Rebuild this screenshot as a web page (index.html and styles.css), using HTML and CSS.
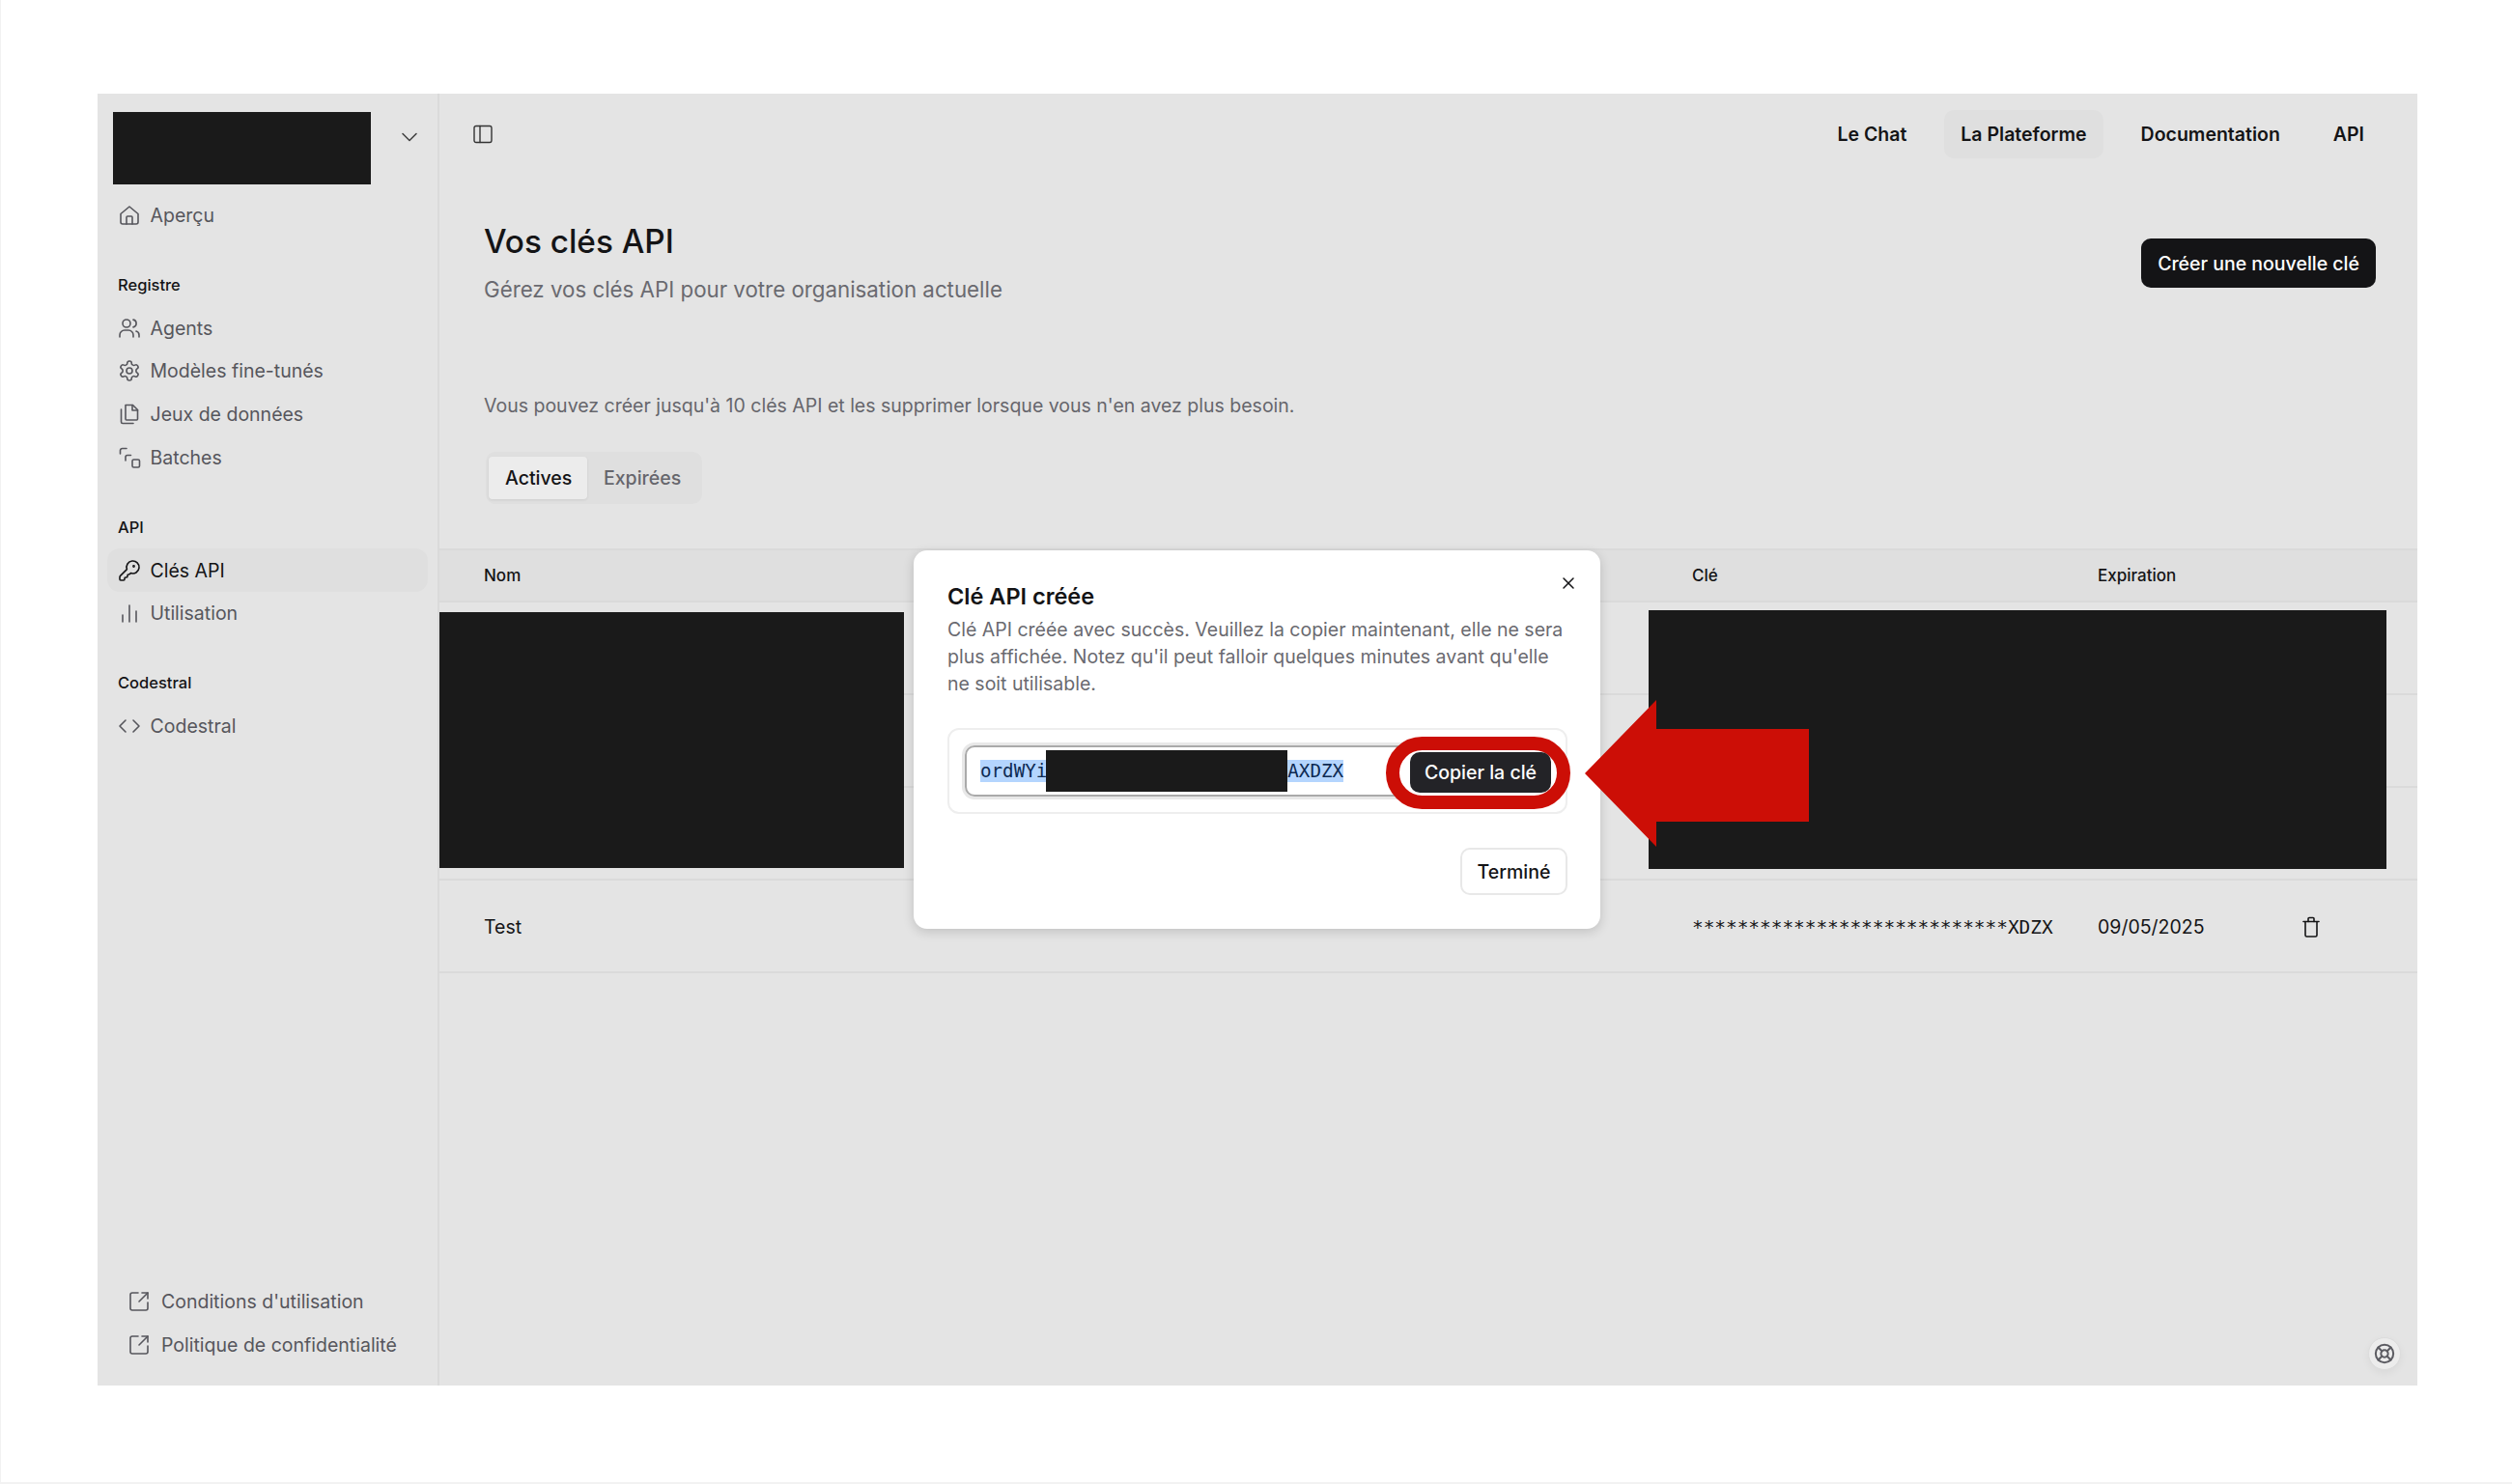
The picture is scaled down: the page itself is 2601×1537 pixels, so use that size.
FILE: index.html
```html
<!DOCTYPE html>
<html lang="fr">
<head>
    <meta charset="UTF-8">
    <title>Vos clés API</title>
    <link rel="stylesheet" href="styles.css">
</head>
<body>
    <div class="page">
        <div class="app">
            <aside class="sidebar">
                <div class="org">
                    <div class="redact org-logo"></div>
                    <svg class="org-chevron" viewBox="0 0 24 24"><path d="m5 8.5 7 7 7-7"/></svg>
                </div>
                <a class="nav-item">
                    <svg class="icon" viewBox="0 0 24 24"><path d="M3 10.5 12 3l9 7.5V19a2 2 0 0 1-2 2H5a2 2 0 0 1-2-2z"/><path d="M9 21v-7a1 1 0 0 1 1-1h4a1 1 0 0 1 1 1v7"/></svg>
                    Aperçu
                </a>

                <div class="nav-label">Registre</div>
                <a class="nav-item">
                    <svg class="icon" viewBox="0 0 24 24"><circle cx="9" cy="7" r="4"/><path d="M2 21v-2a5 5 0 0 1 5-5h4a5 5 0 0 1 5 5v2"/><path d="M16 3.1a4 4 0 0 1 0 7.8"/><path d="M22 21v-2a4 4 0 0 0-3-3.9"/></svg>
                    Agents
                </a>
                <a class="nav-item">
                    <svg class="icon" viewBox="0 0 24 24"><path d="M12.22 2h-.44a2 2 0 0 0-2 2v.18a2 2 0 0 1-1 1.73l-.43.25a2 2 0 0 1-2 0l-.15-.08a2 2 0 0 0-2.73.73l-.22.38a2 2 0 0 0 .73 2.73l.15.1a2 2 0 0 1 1 1.72v.51a2 2 0 0 1-1 1.74l-.15.09a2 2 0 0 0-.73 2.73l.22.38a2 2 0 0 0 2.73.73l.15-.08a2 2 0 0 1 2 0l.43.25a2 2 0 0 1 1 1.73V20a2 2 0 0 0 2 2h.44a2 2 0 0 0 2-2v-.18a2 2 0 0 1 1-1.73l.43-.25a2 2 0 0 1 2 0l.15.08a2 2 0 0 0 2.73-.73l.22-.39a2 2 0 0 0-.73-2.73l-.15-.08a2 2 0 0 1-1-1.74v-.5a2 2 0 0 1 1-1.74l.15-.09a2 2 0 0 0 .73-2.73l-.22-.38a2 2 0 0 0-2.73-.73l-.15.08a2 2 0 0 1-2 0l-.43-.25a2 2 0 0 1-1-1.73V4a2 2 0 0 0-2-2z"/><circle cx="12" cy="12" r="3"/></svg>
                    Modèles fine-tunés
                </a>
                <a class="nav-item">
                    <svg class="icon" viewBox="0 0 24 24"><path d="M8 2.500h7.500L20.500 7.500V17a1 1 0 0 1-1 1H9a1 1 0 0 1-1-1z"/><path d="M15 2.500v5.500h5.500"/><path d="M3.500 7v13a1.500 1.500 0 0 0 1.500 1.500h11"/></svg>
                    Jeux de données
                </a>
                <a class="nav-item">
                    <svg class="icon" viewBox="0 0 24 24"><rect x="15" y="14" width="7.500" height="8" rx="1.500"/><path d="M2.500 8V4.500a2 2 0 0 1 2-2H9"/><path d="M8 15v-3.500a2 2 0 0 1 2-2h3.500"/></svg>
                    Batches
                </a>

                <div class="nav-label">API</div>
                <a class="nav-item active">
                    <svg class="icon" viewBox="0 0 24 24"><path d="M2.586 17.414A2 2 0 0 0 2 18.828V21a1 1 0 0 0 1 1h3a1 1 0 0 0 1-1v-1a1 1 0 0 1 1-1h1a1 1 0 0 0 1-1v-1a1 1 0 0 1 1-1h.172a2 2 0 0 0 1.414-.586l.814-.814a6.500 6.500 0 1 0-4-4z"/><circle cx="16.500" cy="7.500" r=".6"/></svg>
                    Clés API
                </a>
                <a class="nav-item">
                    <svg class="icon" viewBox="0 0 24 24"><path d="M5 21v-7"/><path d="M12 21V4"/><path d="M19 21V10"/></svg>
                    Utilisation
                </a>

                <div class="nav-label">Codestral</div>
                <a class="nav-item">
                    <svg class="icon" viewBox="0 0 24 24"><path d="m16 18 6-6-6-6"/><path d="m8 6-6 6 6 6"/></svg>
                    Codestral
                </a>

                <div class="sidebar-footer">
                    <a class="nav-item footer-link">
                        <svg class="icon" viewBox="0 0 24 24"><path d="M21 13v6a2 2 0 0 1-2 2H5a2 2 0 0 1-2-2V5a2 2 0 0 1 2-2h6"/><path d="m21 3-9 9"/><path d="M15 3h6v6"/></svg>
                        Conditions d'utilisation
                    </a>
                    <a class="nav-item footer-link">
                        <svg class="icon" viewBox="0 0 24 24"><path d="M21 13v6a2 2 0 0 1-2 2H5a2 2 0 0 1-2-2V5a2 2 0 0 1 2-2h6"/><path d="m21 3-9 9"/><path d="M15 3h6v6"/></svg>
                        Politique de confidentialité
                    </a>
                </div>
            </aside>

            <main class="main">
                <header class="topbar">
                    <svg class="panel-icon" viewBox="0 0 20 20"><rect x="1" y="1.500" width="18" height="17" rx="2"/><path d="M7 1.500v17"/></svg>
                    <nav class="topnav">
                        <a>Le Chat</a>
                        <a class="current">La Plateforme</a>
                        <a>Documentation</a>
                        <a>API</a>
                    </nav>
                </header>

                <section class="heading">
                    <div>
                        <h1>Vos clés API</h1>
                        <p class="subtitle">Gérez vos clés API pour votre organisation actuelle</p>
                    </div>
                    <button class="btn-primary">Créer une nouvelle clé</button>
                </section>

                <p class="info">Vous pouvez créer jusqu'à 10 clés API et les supprimer lorsque vous n'en avez plus besoin.</p>

                <div class="tabs">
                    <span class="tab selected">Actives</span>
                    <span class="tab">Expirées</span>
                </div>

                <div class="table">
                    <div class="row head">
                        <span>Nom</span>
                        <span>Clé</span>
                        <span>Expiration</span>
                    </div>
                    <div class="row"></div>
                    <div class="row"></div>
                    <div class="row"></div>
                    <div class="row">
                        <span>Test</span>
                        <span class="masked">****************************XDZX</span>
                        <span>09/05/2025</span>
                        <svg class="trash" viewBox="0 0 18 22"><path d="M3 6v13.500A1.500 1.500 0 0 0 4.500 21h9a1.500 1.500 0 0 0 1.500-1.500V6"/><path d="M1 5.500h16"/><path d="M6 5.500V2.500A1 1 0 0 1 7 1.500h4a1 1 0 0 1 1 1v3"/></svg>
                    </div>
                </div>
            </main>

            <div class="redact redact-left"></div>
            <div class="redact redact-right"></div>

            <div class="help">
                <svg viewBox="0 0 24 24"><circle cx="12" cy="12" r="10"/><circle cx="12" cy="12" r="4"/><path d="m4.900 4.900 4.300 4.300"/><path d="m14.800 14.800 4.300 4.300"/><path d="m14.800 9.200 4.300-4.300"/><path d="m4.900 19.100 4.300-4.300"/></svg>
            </div>

            <div class="modal">
                <svg class="modal-close" viewBox="0 0 14 14"><path d="m2 2 10 10"/><path d="M12 2 2 12"/></svg>
                <h2>Clé API créée</h2>
                <p>Clé API créée avec succès. Veuillez la copier maintenant, elle ne sera plus affichée. Notez qu'il peut falloir quelques minutes avant qu'elle ne soit utilisable.</p>
                <div class="key-box">
                    <div class="key-input">
                        <span class="sel">ordWYi</span><span class="redact key-redact"></span><span class="sel">AXDZX</span>
                    </div>
                    <div class="copy-ring"><button class="btn-copy">Copier la clé</button></div>
                </div>
                <div class="modal-foot"><button class="btn-done">Terminé</button></div>
            </div>

            <svg class="arrow" viewBox="0 0 232 152"><polygon points="0,76 74,0 74,30 232,30 232,126 74,126 74,152"/></svg>
        </div>
    </div>
</body>
</html>
```

FILE: styles.css
```css
* {
    box-sizing: border-box;
}

body {
    margin: 0;
    background: white;
    font-family: Inter, "Noto Sans", sans-serif;
    font-size: 19.5px;
    color: #141416;
}

svg {
    fill: none;
    stroke: currentColor;
    stroke-width: 1.6;
    stroke-linecap: round;
    stroke-linejoin: round;
    flex-shrink: 0;
}

.page {
    width: 2601px;
    height: 1537px;
    padding: 97px 98px 102px 101px;
    border-left: 1px solid #f2f2f2;
    border-bottom: 2px solid #f2f2f2;
}

.app {
    position: relative;
    display: flex;
    height: 1338px;
    margin-left: -1px;
    background: #e4e4e4;
}

.redact {
    background: #1a1a1a;
}

/* sidebar */

.sidebar {
    width: 354px;
    display: flex;
    flex-direction: column;
    padding: 19px 10px 20px;
    border-right: 2px solid #dadada;
}

.org {
    display: flex;
    justify-content: space-between;
    margin: 0 0 9.6px 6px;
}

.org-logo {
    width: 267px;
    height: 75px;
}

.org-chevron {
    width: 24px;
    height: 24px;
    margin: 14px 7px 0 0;
    color: #444;
}

.nav-item {
    display: flex;
    align-items: center;
    gap: 9.5px;
    height: 44.75px;
    padding-left: 11px;
    border-radius: 13px;
    color: #56565c;
}

.nav-item.active {
    background: #dfdfdf;
    color: #141416;
}

.nav-item .icon {
    width: 24px;
    height: 24px;
}

.nav-label {
    display: flex;
    align-items: center;
    height: 44.75px;
    margin-top: 27.2px;
    padding-left: 11px;
    font-size: 16.5px;
    font-weight: 500;
}

.sidebar-footer {
    margin-top: auto;
}

.footer-link {
    padding-left: 21px;
    gap: 11px;
}

/* main */

.main {
    flex: 1;
    min-width: 0;
}

.topbar {
    display: flex;
    align-items: center;
    justify-content: space-between;
    height: 50px;
    margin-top: 17px;
    padding: 0 38px 0 35px;
}

.panel-icon {
    width: 20px;
    height: 20px;
    stroke-width: 1.4;
    color: #333;
}

.topnav {
    display: flex;
    align-items: center;
    font-weight: 560;
}

.topnav a {
    display: flex;
    align-items: center;
    height: 50px;
    padding: 0 17px;
    margin-left: 22px;
    border-radius: 10px;
}

.topnav a:last-child {
    margin-left: 21px;
}

.topnav a.current {
    background: #dfdfdf;
}

.heading {
    display: flex;
    align-items: flex-start;
    justify-content: space-between;
    padding: 0 43px 0 46px;
    margin-top: 63px;
}

h1 {
    margin: 0;
    font-size: 33.3px;
    font-weight: 500;
    line-height: 46px;
}

.subtitle {
    margin: 10px 0 0;
    font-size: 22.3px;
    line-height: 34px;
    color: #6a6a70;
}

.btn-primary {
    height: 51px;
    margin-top: 20px;
    padding: 0 17px;
    border: 0;
    border-radius: 10px;
    background: #141416;
    color: white;
    font: 500 19.5px Inter, sans-serif;
}

.info {
    margin: 88px 0 0;
    padding: 0 46px;
    line-height: 30px;
    color: #66666c;
}

.tabs {
    display: flex;
    margin: 33px 0 0 48px;
    padding: 5px 3px;
    width: 224px;
    height: 54px;
    border-radius: 10px;
    background: #dfdfdf;
}

.tab {
    display: flex;
    align-items: center;
    padding: 0 17px;
    color: #66666c;
    font-weight: 500;
}

.tab.selected {
    width: 102px;
    border-radius: 4px;
    background: #ececec;
    color: #141416;
    box-shadow: 0 1px 3px rgba(0,0,0,0.08);
}

.table {
    margin-top: 46px;
}

.row {
    display: grid;
    grid-template-columns: 1251px 420px 212px 1fr;
    align-items: center;
    height: 96px;
    padding: 2px 0 0 46px;
    border-bottom: 2px solid #dadada;
}

.row.head {
    height: 56px;
    padding-top: 0;
    background: #dfdfdf;
    border-top: 2px solid #dadada;
    font-size: 17px;
    font-weight: 500;
}

.masked {
    font: 19.4px "DejaVu Sans Mono", monospace;
}

.trash {
    width: 18px;
    height: 22px;
}

/* things lying over the table */

.redact-left {
    position: absolute;
    left: 354px;
    top: 537px;
    width: 481px;
    height: 265px;
}

.redact-right {
    position: absolute;
    left: 1606px;
    top: 535px;
    width: 764px;
    height: 268px;
}

.help {
    position: absolute;
    left: 2351px;
    top: 1288px;
    width: 34px;
    height: 34px;
    display: flex;
    align-items: center;
    justify-content: center;
    border-radius: 50%;
    border: 1px solid #dcdcdc;
    background: #ececec;
    color: #5c5c62;
    box-shadow: 0 3px 8px rgba(0,0,0,0.05);
}

.help svg {
    width: 22px;
    height: 22px;
    stroke-width: 2.2;
}

.modal {
    position: absolute;
    left: 845px;
    top: 473px;
    width: 711px;
    height: 392px;
    padding: 33px 34px 0 35px;
    border-radius: 14px;
    background: white;
    box-shadow: 0 3px 12px rgba(0,0,0,0.16);
}

.modal-close {
    position: absolute;
    right: 26px;
    top: 27px;
    width: 14px;
    height: 14px;
    stroke-width: 1.5;
}

h2 {
    margin: 0;
    font-size: 23.5px;
    font-weight: 600;
    line-height: 30px;
}

.modal p {
    margin: 5px 0 0;
    line-height: 28px;
    color: #6a6a70;
}

.key-box {
    display: flex;
    align-items: center;
    height: 89px;
    margin-top: 32px;
    padding-left: 16px;
    border: 2px solid #eeeeee;
    border-radius: 12px;
}

.key-input {
    display: flex;
    align-items: center;
    flex-shrink: 0;
    width: 460px;
    height: 53px;
    padding-left: 14px;
    border: 2px solid #aaaaaa;
    border-radius: 10px;
    box-shadow: 0 0 0 3px #e8e8e8;
    font: 19.2px "DejaVu Sans Mono", monospace;
    color: #0d2a52;
}

.sel {
    background: #b4d5fe;
    line-height: 23px;
}

.key-redact {
    width: 250px;
    height: 43px;
    margin-left: -1px;
}

.copy-ring {
    position: relative;
    z-index: 1;
    display: flex;
    align-items: center;
    justify-content: flex-end;
    flex-shrink: 0;
    width: 191px;
    height: 75px;
    margin: 3px 0 0 -24px;
    padding-right: 6px;
    border: 14px solid #cc0e06;
    border-radius: 38px;
    background: white;
}

.btn-copy {
    flex-shrink: 0;
    width: 146px;
    height: 42px;
    border: 0;
    border-radius: 10px;
    background: #232327;
    color: white;
    font: 500 19.5px Inter, sans-serif;
}

.modal-foot {
    display: flex;
    justify-content: flex-end;
    margin-top: 35px;
}

.btn-done {
    width: 111px;
    height: 49px;
    border: 2px solid #e8e8e8;
    border-radius: 10px;
    background: white;
    color: #141416;
    font: 500 19.5px Inter, sans-serif;
}

.arrow {
    position: absolute;
    left: 1540px;
    top: 628px;
    width: 232px;
    height: 152px;
    fill: #cc0e06;
    stroke: none;
}
```
